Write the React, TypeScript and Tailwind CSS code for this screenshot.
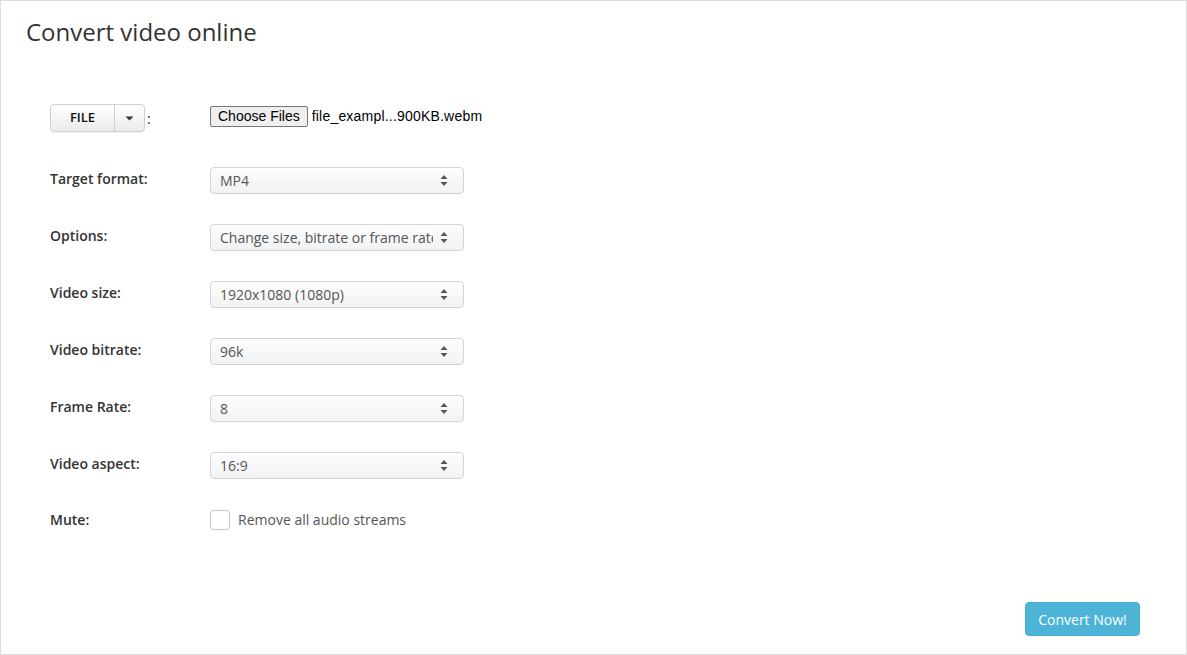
import React from "react";

const Arrows = () => (
  <svg width="8" height="13" viewBox="0 0 8 13" className="shrink-0">
    <path d="M4 1 L7.5 5 L0.5 5 Z" fill="#555" />
    <path d="M4 12 L7.5 8 L0.5 8 Z" fill="#555" />
  </svg>
);

function Select({ value }: { value: string }) {
  return (
    <div className="w-[254px] h-[27px] rounded-[4px] border border-[#d4d4d4] bg-gradient-to-b from-[#fdfdfd] to-[#f0f2f4] flex items-center pl-[9px] pr-[15px] shadow-[inset_0_1px_0_rgba(255,255,255,0.8)]">
      <span className="w-[213px] overflow-hidden whitespace-nowrap text-[14px] text-[#555]">{value}</span>
      <span className="flex-1" />
      <Arrows />
    </div>
  );
}

function Row({ label, children }: { label: string; children: React.ReactNode }) {
  return (
    <div className="flex items-center">
      <div className="w-[160px] text-[14px] font-semibold text-[#333] -mt-[5px]">{label}</div>
      {children}
    </div>
  );
}

export default function App() {
  return (
    <div
      className="w-[1187px] h-[655px] bg-white border border-[#dcdcdc] relative flex flex-col"
      style={{ fontFamily: '"Open Sans", "Liberation Sans", sans-serif' }}
    >
      <h1 className="text-[24px] leading-[32px] text-[#333] pl-[25px] pt-[15px] font-normal">Convert video online</h1>

      <div className="pl-[49px] pt-[56px] flex flex-col gap-[30px]">
        <div className="flex items-center mb-[5px]">
          <div className="w-[160px] flex items-center">
            <div className="flex h-[28px] rounded-[4px] border border-[#d0d0d0] bg-gradient-to-b from-white to-[#ebebeb] shadow-[0_1px_1px_rgba(0,0,0,0.05)]">
              <div className="w-[64px] flex items-center justify-center text-[13px] font-semibold text-[#111] border-r border-[#d0d0d0]">FILE</div>
              <div className="w-[29px] flex items-center justify-center">
                <svg width="9" height="5" viewBox="0 0 9 5"><path d="M0.5 0.5 L8.5 0.5 L4.5 4.5 Z" fill="#333" /></svg>
              </div>
            </div>
            <span className="ml-[2px] text-[14px] text-[#333]">:</span>
          </div>
          <div className="flex items-center -mt-[4px]" style={{ fontFamily: '"Liberation Sans", Arial, sans-serif' }}>
            <div className="h-[21px] px-[7px] flex items-center rounded-[2px] border border-[#767676] bg-[#efefef] text-[14px] text-black">Choose Files</div>
            <span className="ml-[4px] text-[14px] text-black tracking-[0.2px]">file_exampl...900KB.webm</span>
          </div>
        </div>

        <Row label="Target format:"><Select value="MP4" /></Row>
        <Row label="Options:"><Select value="Change size, bitrate or frame rate" /></Row>
        <Row label="Video size:"><Select value="1920x1080 (1080p)" /></Row>
        <Row label="Video bitrate:"><Select value="96k" /></Row>
        <Row label="Frame Rate:"><Select value="8" /></Row>
        <Row label="Video aspect:"><Select value="16:9" /></Row>
        <div className="flex items-center">
          <div className="w-[160px] text-[14px] font-semibold text-[#333]">Mute:</div>
          <div className="w-[20px] h-[20px] rounded-[3px] border border-[#c8c8c8] bg-white" />
          <span className="ml-[8px] text-[14px] text-[#555]">Remove all audio streams</span>
        </div>
      </div>

      <div className="mt-auto flex justify-end pr-[46px] pb-[18px]">
        <div className="w-[115px] h-[34px] rounded-[4px] bg-[#4db4d7] border border-[#46acd0] flex items-center justify-center text-[14px] text-white">Convert Now!</div>
      </div>
    </div>
  );
}
